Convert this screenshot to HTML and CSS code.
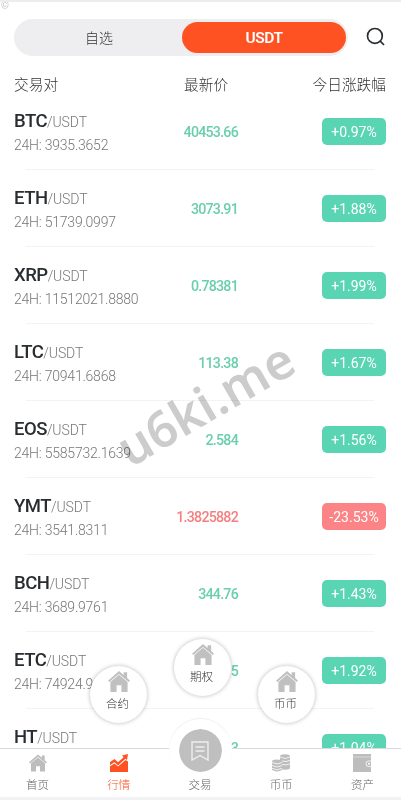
FILE: index.html
```
<!DOCTYPE html>
<html lang="zh">
  <head>
    <meta charset="utf-8" />
    <title>行情</title>
    <meta name="viewport" content="width=device-width, initial-scale=1.0" />
    <link rel="stylesheet" href="styles.css" />
  </head>
  <body>
    <svg class="symbols">
      <symbol id="home" viewBox="0 0 20 19">
        <path d="M10 0 L0 8.8 L1.2 10 L10 2.6 L18.8 10 L20 8.8 L17.4 6.4 V1.2 H14.2 V3.6 Z" />
        <path d="M10 3.3 L2.2 9.9 V19 H7.8 V13 H12.2 V19 H17.8 V9.9 Z" />
      </symbol>
    </svg>

    <div class="mark">©</div>

    <header class="top">
      <div class="tabs">
        <div class="tab">自选</div>
        <div class="tab active">USDT</div>
      </div>
      <svg class="search" viewBox="0 0 20 20">
        <circle cx="8.9" cy="8.9" r="7.4" />
        <path d="M14.2 14.2 L18 18" />
      </svg>
    </header>

    <div class="head">
      <div class="pair">交易对</div>
      <div class="price">最新价</div>
      <div class="change">今日涨跌幅</div>
    </div>

    <main class="list">
      <div class="row">
        <div class="pair">
          <div class="name"><b>BTC</b>/USDT</div>
          <div class="volume">24H: 3935.3652</div>
        </div>
        <div class="price">40453.66</div>
        <div class="badge">+0.97%</div>
      </div>
      <div class="row">
        <div class="pair">
          <div class="name"><b>ETH</b>/USDT</div>
          <div class="volume">24H: 51739.0997</div>
        </div>
        <div class="price">3073.91</div>
        <div class="badge">+1.88%</div>
      </div>
      <div class="row">
        <div class="pair">
          <div class="name"><b>XRP</b>/USDT</div>
          <div class="volume">24H: 11512021.8880</div>
        </div>
        <div class="price">0.78381</div>
        <div class="badge">+1.99%</div>
      </div>
      <div class="row">
        <div class="pair">
          <div class="name"><b>LTC</b>/USDT</div>
          <div class="volume">24H: 70941.6868</div>
        </div>
        <div class="price">113.38</div>
        <div class="badge">+1.67%</div>
      </div>
      <div class="row">
        <div class="pair">
          <div class="name"><b>EOS</b>/USDT</div>
          <div class="volume">24H: 5585732.1639</div>
        </div>
        <div class="price">2.584</div>
        <div class="badge">+1.56%</div>
      </div>
      <div class="row down">
        <div class="pair">
          <div class="name"><b>YMT</b>/USDT</div>
          <div class="volume">24H: 3541.8311</div>
        </div>
        <div class="price">1.3825882</div>
        <div class="badge">-23.53%</div>
      </div>
      <div class="row">
        <div class="pair">
          <div class="name"><b>BCH</b>/USDT</div>
          <div class="volume">24H: 3689.9761</div>
        </div>
        <div class="price">344.76</div>
        <div class="badge">+1.43%</div>
      </div>
      <div class="row">
        <div class="pair">
          <div class="name"><b>ETC</b>/USDT</div>
          <div class="volume">24H: 74924.9</div>
        </div>
        <div class="price">5</div>
        <div class="badge">+1.92%</div>
      </div>
      <div class="row">
        <div class="pair">
          <div class="name"><b>HT</b>/USDT</div>
          <div class="volume">24H:</div>
        </div>
        <div class="price">3</div>
        <div class="badge">+1.04%</div>
      </div>
    </main>

    <div class="watermark">u6ki.me</div>

    <div class="bubble left">
      <svg><use href="#home" /></svg>
      <span>合约</span>
    </div>
    <div class="bubble middle">
      <svg><use href="#home" /></svg>
      <span>期权</span>
    </div>
    <div class="bubble right">
      <svg><use href="#home" /></svg>
      <span>币币</span>
    </div>

    <nav class="bar">
      <div class="item">
        <svg><use href="#home" /></svg>
        <span>首页</span>
      </div>
      <div class="item active">
        <svg viewBox="0 0 18 18">
          <path d="M0 8 L4.5 5 L8 8.2 L13.6 3.2 L12 1.5 L18 0 L17 6 L15.4 4.8 L8 11.4 L4.5 8.2 L0 11 Z" />
          <path d="M0 12.2 L4.5 9.4 L8 12.6 L15.6 6 L18 7.4 V18 H0 Z" />
        </svg>
        <span>行情</span>
      </div>
      <div class="item trade">
        <div class="disc">
          <svg viewBox="0 0 18 20">
            <path d="M1 1 H17 V19 L9 14.5 L1 19 Z M4.5 6 H13.5 M4.5 10 H13.5" />
          </svg>
        </div>
        <span>交易</span>
      </div>
      <div class="item">
        <svg viewBox="0 0 18 18">
          <path d="M8 2 V14.5 Q13 17 18 14.5 V2 Z" />
          <path d="M0 7.5 V16 Q5 18.8 10 16 V7.5 Z" />
          <ellipse cx="13" cy="2.2" rx="5" ry="2" />
          <ellipse cx="5" cy="7.6" rx="5" ry="2" />
          <path class="cut" d="M8 3 Q13 6 18 3 M10 7 Q14 8.4 18 6.4 M10 10.4 Q14 11.8 18 9.8 M0 8.5 Q5 11.5 10 8.5 M0 11.5 Q5 14.5 10 11.5 M0 14.3 Q5 17.3 10 14.3" />
        </svg>
        <span>币币</span>
      </div>
      <div class="item">
        <svg viewBox="0 0 18 18">
          <path d="M0 0 H18 V18 H0 Z" />
          <path class="cut thin" d="M0 3 H18" />
          <path class="cut" d="M18 7 H15.8 A2.8 2.8 0 0 0 15.8 12.6 H18" />
          <circle class="hole" cx="16" cy="9.8" r="1" />
        </svg>
        <span>资产</span>
      </div>
    </nav>
  </body>
</html>
```

FILE: styles.css
```
* {
  box-sizing: border-box;
}

body {
  position: relative;
  width: 401px;
  height: 800px;
  margin: 0;
  padding-top: 17px;
  overflow: hidden;
  background: #fff;
  border-top: 2px solid #ededed;
  border-bottom: 3px solid #f1f2f4;
  font-family: Roboto, "Noto Sans CJK SC", sans-serif;
  color: #333;
}

.symbols {
  position: absolute;
  width: 0;
  height: 0;
}

.mark {
  position: absolute;
  top: -2px;
  left: 1px;
  font-size: 10px;
  line-height: 12px;
  color: #c4c4c4;
}

.top {
  display: flex;
  align-items: center;
  justify-content: space-between;
  height: 36px;
  padding: 0 15px 0 14px;
}

.tabs {
  display: flex;
  width: 334px;
  height: 37px;
  padding: 3px 2px;
  border-radius: 19px;
  background: #eeeef0;
}

.tab {
  width: 166px;
  line-height: 33px;
  text-align: center;
  font-size: 14px;
  font-weight: 300;
}

.tab.active {
  width: 164px;
  border-radius: 16px;
  background: #ff5223;
  color: #fff;
  font-weight: 600;
  font-size: 15.5px;
  letter-spacing: -0.5px;
}

.search {
  width: 20px;
  height: 20px;
  fill: none;
  stroke: #292d30;
  stroke-width: 1.7;
}

.head,
.row {
  display: flex;
  align-items: center;
  justify-content: space-between;
  padding: 0 15px 0 14px;
}

.head {
  height: 20px;
  margin-top: 20px;
  font-size: 14.7px;
  font-weight: 300;
  line-height: 20px;
  white-space: nowrap;
}

.head .pair,
.row .pair {
  width: 124px;
}

.head .price {
  width: 44px;
}

.head .change {
  width: 112px;
  text-align: right;
}

.list {
  margin-top: -2px;
}

.row {
  position: relative;
  height: 77px;
}

.row .pair {
  padding-top: 2px;
}

.row::after {
  content: "";
  position: absolute;
  left: 26px;
  right: 27px;
  bottom: 0;
  height: 1px;
  background: #f3f3f4;
}

.name {
  height: 24px;
  line-height: 24px;
  font-size: 14px;
  font-weight: 300;
  letter-spacing: -0.1px;
  color: #777;
}

.name b {
  font-size: 18.5px;
  font-weight: 500;
  letter-spacing: -0.5px;
  color: #292d30;
}

.volume {
  line-height: 24px;
  font-size: 14px;
  font-weight: 300;
  letter-spacing: -0.22px;
  color: #777;
  white-space: nowrap;
}

.row .price {
  width: 100px;
  font-size: 14.2px;
  font-weight: 500;
  letter-spacing: -0.75px;
  text-align: right;
  color: #6acfab;
}

.badge {
  width: 64px;
  height: 27px;
  margin-left: 84px;
  border-radius: 5px;
  line-height: 28px;
  text-align: center;
  font-size: 14px;
  color: #fff;
  background: #5ad5b3;
}

.row.down .price {
  color: #f67f80;
}

.down .badge {
  background: #fd8486;
}

.watermark {
  position: absolute;
  top: 366px;
  left: 105px;
  width: 200px;
  text-align: center;
  font: 600 50px/70px "Noto Sans", sans-serif;
  color: #ccc;
  mix-blend-mode: multiply;
  transform: rotate(-30deg);
}

.bubble {
  position: absolute;
  display: flex;
  flex-direction: column;
  align-items: center;
  width: 57px;
  height: 57px;
  padding-top: 5px;
  border-radius: 50%;
  background: #fff;
  box-shadow: 0 0 4px rgba(0, 0, 0, 0.28);
  font-size: 11.5px;
  font-weight: 300;
  line-height: 18px;
}

.bubble svg {
  width: 22px;
  height: 21px;
  margin-bottom: 3px;
  fill: #c0c0c0;
}

.bubble span {
  padding-right: 2px;
}

.bubble.left {
  top: 664px;
  left: 90px;
}

.bubble.middle {
  top: 637px;
  left: 174px;
}

.bubble.right {
  top: 664px;
  left: 258px;
}

.bar {
  position: absolute;
  left: -3px;
  right: -2px;
  bottom: 0;
  display: flex;
  height: 49px;
  border-top: 1px solid #d8dadd;
  background: #fff;
}

.item {
  flex: 1;
  display: flex;
  flex-direction: column;
  align-items: center;
  padding-top: 5px;
  font-size: 11.5px;
  font-weight: 300;
  line-height: 18px;
  color: #666;
}

.item > svg {
  width: 18px;
  height: 18px;
  margin-bottom: 4px;
  fill: #bdbdbd;
}

.item.active {
  color: #ff5223;
}

.item.active > svg {
  fill: #ff5223;
}

.item .cut {
  fill: none;
  stroke: #fff;
  stroke-width: 0.8;
}

.item .thin {
  stroke-width: 0.4;
}

.item .hole {
  fill: #fff;
}

.disc {
  display: flex;
  align-items: center;
  justify-content: center;
  width: 63px;
  height: 63px;
  margin: -35px 0 -6px;
  border: 10px solid #fff;
  border-radius: 50%;
  background: #bfbfbf padding-box;
  box-shadow: 0 -1px 1px #eee;
}

.disc svg {
  width: 18px;
  height: 20px;
  fill: none;
  stroke: #eee;
  stroke-width: 1.4;
}
```
